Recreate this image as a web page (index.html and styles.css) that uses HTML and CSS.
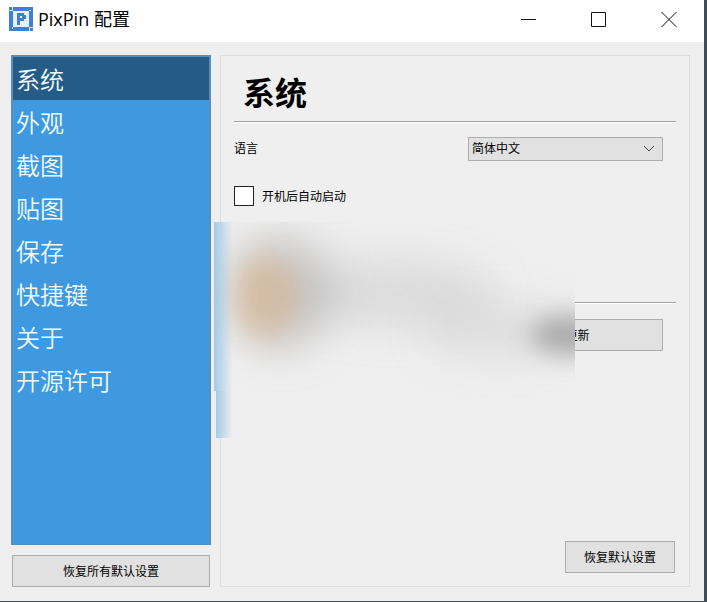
FILE: index.html
```html
<!DOCTYPE html>
<html lang="zh-CN">
<head>
<meta charset="utf-8">
<title>PixPin 配置</title>
<link rel="stylesheet" href="styles.css">
</head>
<body>
<div class="window">
  <header class="titlebar">
    <svg class="logo" viewBox="0 0 24 24" aria-hidden="true">
      <rect width="24" height="24" fill="#3f7fd6"/>
      <path d="M4 4h16v16H4z" fill="#e6f0fc"/>
      <path d="M3.500 0v4M0 3.500h4M20.500 20v4M20 20.500h4M20 3.500h2M3.500 20v2" stroke="#dbe8fa"/>
      <path d="M8 6h7v2h2v4h-2v2h-4v4H8zM11 9v2h2V9z" fill="#3f7fd6" fill-rule="evenodd"/>
    </svg>
    <h1 class="title">PixPin 配置</h1>
    <div class="controls">
      <button class="control" aria-label="最小化"><svg viewBox="0 0 16 16"><path d="M0 8.500h15"/></svg></button>
      <button class="control" aria-label="最大化"><svg viewBox="0 0 16 16"><path d="M.5 1.500h14v14h-14z"/></svg></button>
      <button class="control" aria-label="关闭"><svg viewBox="0 0 16 16"><path d="M.5 1l15 15M15.500 1l-15 15"/></svg></button>
    </div>
  </header>
  <div class="content">
    <aside class="sidebar">
      <nav class="nav">
        <a class="item active" href="#system">系统</a>
        <a class="item" href="#look">外观</a>
        <a class="item" href="#capture">截图</a>
        <a class="item" href="#pin">贴图</a>
        <a class="item" href="#save">保存</a>
        <a class="item" href="#keys">快捷键</a>
        <a class="item" href="#about">关于</a>
        <a class="item" href="#license">开源许可</a>
      </nav>
      <button class="button">恢复所有默认设置</button>
    </aside>
    <main class="panel">
      <h2 class="heading">系统</h2>
      <hr class="rule">
      <div class="row language">
        <label for="lang">语言</label>
        <div class="picker">
          <select id="lang"><option>简体中文</option></select>
          <svg class="chevron" viewBox="0 0 12 8" aria-hidden="true"><path d="M1 1l5 5 5-5"/></svg>
        </div>
      </div>
      <label class="startup"><input type="checkbox"><span>开机后自动启动</span></label>
      <hr class="rule second">
      <div class="row update"><button class="button">检查更新</button></div>
      <div class="footer"><button class="button reset">恢复默认设置</button></div>
      <div class="haze" aria-hidden="true">
        <div class="blob band"></div>
        <div class="blob trail"></div>
        <div class="blob grey"></div>
        <div class="blob tan"></div>
        <div class="blob dark"></div>
        <div class="edge"></div>
        <div class="edge low"></div>
      </div>
    </main>
  </div>
</div>
</body>
</html>
```
FILE: styles.css
```css
* { box-sizing: border-box; }

body {
  margin: 0;
  padding: 0 3px 1px 0;
  background: #404d56;
  color: #000;
  font: 12px/16px "Noto Sans", "Noto Sans CJK SC", sans-serif;
}

button, select { font: inherit; color: inherit; }

.window {
  display: flex;
  flex-direction: column;
  min-height: calc(100vh - 1px);
  background: #efefef;
}

.titlebar {
  display: flex;
  align-items: center;
  height: 42px;
  padding: 0 0 4px 9px;
  background: #fff;
}

.logo { width: 24px; height: 24px; }

.title {
  margin: 0 auto 0 5px;
  font-family: "Open Sans", "Noto Sans CJK SC", sans-serif;
  font-size: 18px;
  line-height: 24px;
  font-weight: 400;
}

.controls { display: flex; }

.control {
  display: grid;
  place-items: center;
  width: 70px;
  height: 38px;
  padding: 0;
  border: 0;
  background: none;
}

.control svg {
  width: 16px;
  height: 16px;
  fill: none;
  stroke: #111;
}

.content {
  flex: 1;
  display: flex;
  gap: 9px;
  padding: 13px 14px 14px 11px;
}

.sidebar {
  flex: 0 0 200px;
  display: flex;
  flex-direction: column;
  gap: 10px;
}

.nav {
  flex: 1;
  border: 2px solid #5b8fbb;
  border-bottom-width: 1px;
  background: #3e99e0;
}

.item {
  display: block;
  height: 43px;
  padding: 0 3px;
  color: #f1fbff;
  font-size: 24px;
  line-height: 45px;
  font-weight: 350;
  text-decoration: none;
}

.item.active { background: #255c87; }

.button {
  height: 32px;
  padding: 2px 16px 0;
  border: 1px solid #adadad;
  background: #e1e1e1;
}

.sidebar .button { margin: 0 1px; }

.panel {
  position: relative;
  flex: 1;
  display: flex;
  flex-direction: column;
  padding: 13px;
  border: 1px solid #dcdcdc;
}

.heading {
  margin: 0 9px;
  font-size: 32px;
  line-height: 48px;
  font-weight: 700;
}

.rule {
  width: 100%;
  height: 2px;
  margin: 4px 0 0;
  border: 0;
  border-top: 1px solid #a0a0a0;
  background: #fff;
}

.row {
  display: grid;
  grid-template-columns: 234px 1fr;
  align-items: center;
  padding-right: 13px;
}

.language { margin-top: 14px; }

.picker { position: relative; }

.picker select {
  display: block;
  appearance: none;
  width: 100%;
  height: 24px;
  padding: 0 3px;
  border: 1px solid #adadad;
  border-radius: 0;
  background: #e1e1e1;
}

.chevron {
  position: absolute;
  top: 8px;
  right: 8px;
  width: 12px;
  height: 8px;
  fill: none;
  stroke: #444;
  pointer-events: none;
}

.startup {
  display: flex;
  align-items: center;
  gap: 8px;
  margin-top: 25px;
}

.startup span { padding-top: 2px; }

.startup input {
  appearance: none;
  width: 20px;
  height: 20px;
  margin: 0;
  border: 1px solid #222;
  background: #fff;
}

.second { margin-top: 96px; }

.update { margin-top: 15px; }

.update .button { grid-column: 2; }

.footer {
  display: flex;
  justify-content: flex-end;
  margin-top: auto;
  padding-right: 1px;
}

.reset { width: 110px; }

.haze {
  position: absolute;
  top: 166px;
  left: -7px;
  right: 114px;
  height: 216px;
  overflow: hidden;
  background: #efefef;
}

.blob {
  position: absolute;
  border-radius: 50%;
  filter: blur(20px);
}

.band {
  top: 38px;
  left: 80px;
  width: 200px;
  height: 66px;
  background: rgba(150, 150, 150, .22);
}

.trail {
  top: 84px;
  left: 210px;
  width: 150px;
  height: 50px;
  background: rgba(160, 160, 160, .22);
}

.grey {
  top: 12px;
  left: 18px;
  width: 100px;
  height: 116px;
  background: rgba(140, 140, 140, .36);
}

.tan {
  top: 32px;
  left: 20px;
  width: 62px;
  height: 84px;
  background: rgba(217, 170, 120, .52);
  filter: blur(16px);
}

.dark {
  top: 93px;
  right: -40px;
  width: 84px;
  height: 40px;
  background: rgba(110, 110, 110, .5);
  filter: blur(12px);
}

.edge {
  position: absolute;
  top: 0;
  left: 0;
  width: 19px;
  height: 169px;
  background: linear-gradient(90deg, rgba(150, 197, 230, .85), rgba(165, 202, 230, .6) 40%, transparent);
}

.edge.low {
  top: 169px;
  height: 47px;
  border-left: 2px solid #efefef;
}
```
